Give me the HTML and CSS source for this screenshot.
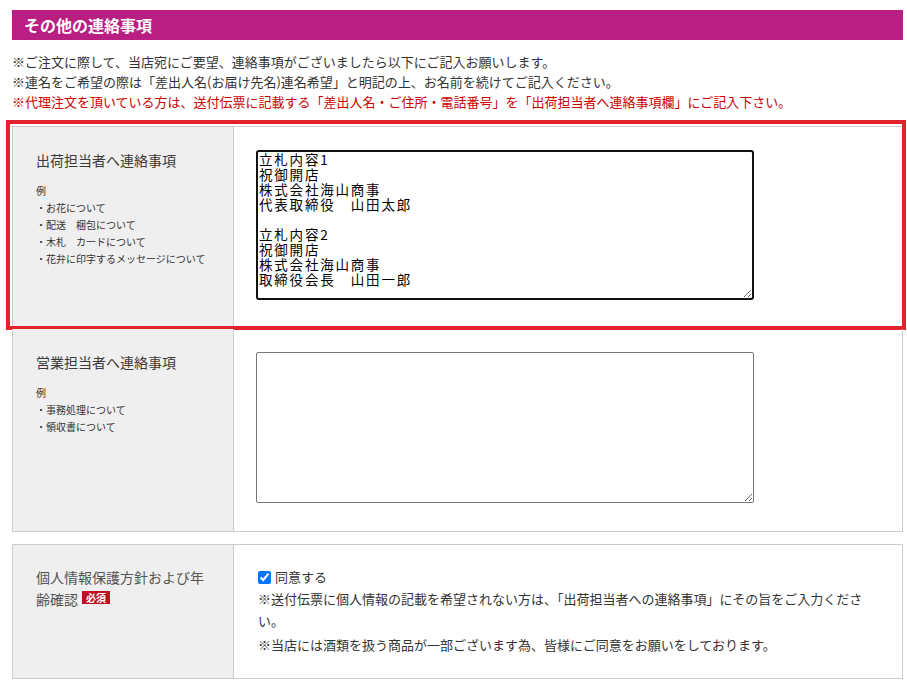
FILE: index.html
```html
<!DOCTYPE html>
<html lang="ja">
<head>
<meta charset="utf-8">
<title>その他の連絡事項</title>
<link rel="stylesheet" href="styles.css">
</head>
<body>
<div class="page">
  <h2 class="section-title">その他の連絡事項</h2>
  <div class="notes">
    <p>※ご注文に際して、当店宛にご要望、連絡事項がございましたら以下にご記入お願いします。</p>
    <p>※連名をご希望の際は「差出人名(お届け先名)連名希望」と明記の上、お名前を続けてご記入ください。</p>
    <p class="notes-red">※代理注文を頂いている方は、送付伝票に記載する「差出人名・ご住所・電話番号」を「出荷担当者へ連絡事項欄」にご記入下さい。</p>
  </div>

  <div class="form-table">
    <div class="row row-highlight">
      <div class="label-cell">
        <div class="label">出荷担当者へ連絡事項</div>
        <ul class="examples">
          <li>例</li>
          <li>・お花について</li>
          <li>・配送　梱包について</li>
          <li>・木札　カードについて</li>
          <li>・花弁に印字するメッセージについて</li>
        </ul>
      </div>
      <div class="input-cell">
        <textarea class="memo memo-active">立札内容1
祝御開店
株式会社海山商事
代表取締役　山田太郎

立札内容2
祝御開店
株式会社海山商事
取締役会長　山田一郎</textarea>
      </div>
      <div class="highlight-box"></div>
    </div>
    <div class="row">
      <div class="label-cell">
        <div class="label">営業担当者へ連絡事項</div>
        <ul class="examples">
          <li>例</li>
          <li>・事務処理について</li>
          <li>・領収書について</li>
        </ul>
      </div>
      <div class="input-cell">
        <textarea class="memo"></textarea>
      </div>
    </div>
  </div>

  <div class="form-table form-table-agree">
    <div class="row">
      <div class="label-cell label-cell-agree">
        <p class="label-agree">個人情報保護方針および年</p>
        <p class="label-agree">齢確認<span class="badge">必須</span></p>
      </div>
      <div class="agree-cell">
        <label class="agree"><input type="checkbox" checked class="agree-check">同意する</label>
        <p>※送付伝票に個人情報の記載を希望されない方は、「出荷担当者への連絡事項」にその旨をご入力ください。</p>
        <p class="agree-last">※当店には酒類を扱う商品が一部ございます為、皆様にご同意をお願いをしております。</p>
      </div>
    </div>
  </div>
</div>
</body>
</html>
```

FILE: styles.css
```css
* {
  box-sizing: border-box;
}

html, body {
  margin: 0;
  padding: 0;
  background: #ffffff;
}

body {
  font-family: "Noto Sans CJK JP", "Noto Sans", sans-serif;
  color: #333333;
}

.page {
  padding: 10px 4px 0 12px;
}

.section-title {
  margin: 0;
  height: 30px;
  line-height: 30px;
  padding-left: 12px;
  background: #b91e82;
  color: #ffffff;
  font-size: 16px;
  font-weight: bold;
}

.notes {
  margin: 12px 0 14px;
  font-size: 13px;
  line-height: 20px;
  color: #333333;
}

.notes p {
  margin: 0;
  white-space: nowrap;
}

.notes .notes-red {
  color: #cc0000;
}

.form-table {
  width: 891px;
}

.row {
  display: grid;
  grid-template-columns: 221px 1fr;
  border: 1px solid #cccccc;
  position: relative;
}

.row + .row {
  border-top: none;
}

.label-cell {
  background: #efefef;
  border-right: 1px solid #cccccc;
  padding: 23px 24px 20px 23px;
}

.label {
  font-size: 14px;
  line-height: 20px;
  color: #3a3a3a;
}

.examples {
  list-style: none;
  margin: 12px 0 0;
  padding: 0;
  font-size: 10px;
  line-height: 17px;
  color: #333333;
}

.input-cell {
  padding: 23px 22px 28px 22px;
}

.memo {
  display: block;
  width: 498px;
  height: 151px;
  margin: 0;
  padding: 0 1px;
  font-family: "Noto Sans CJK JP", monospace;
  font-size: 13.5px;
  letter-spacing: 1.8px;
  line-height: 15px;
  color: #000000;
  background: #ffffff;
  border: 1px solid #767676;
  border-radius: 2px;
  overflow: hidden;
}

.memo-active {
  height: 150px;
  border: 2px solid #111111;
  border-radius: 3px;
}

.highlight-box {
  position: absolute;
  top: -7px;
  left: -7px;
  right: -4px;
  bottom: -2px;
  border: 4px solid #e1232d;
  pointer-events: none;
}

.form-table-agree {
  margin-top: 12px;
}

.label-cell-agree {
  padding: 21px 24px 20px 23px;
}

.label-agree {
  margin: 0;
  font-size: 14px;
  line-height: 22px;
  color: #555555;
  white-space: nowrap;
}

.badge {
  display: inline-block;
  margin-left: 4px;
  padding: 0 4px;
  background: #c40f22;
  color: #ffffff;
  font-size: 10px;
  font-weight: bold;
  line-height: 13px;
  vertical-align: 3px;
}

.agree-cell {
  padding: 21px 28px 22px 24px;
  font-size: 13px;
  line-height: 22px;
  color: #333333;
}

.agree {
  display: flex;
  align-items: center;
}

.agree-check {
  width: 13px;
  height: 13px;
  margin: 0 4px 0 0;
}

.agree-cell p {
  margin: 0;
}

.agree-cell .agree-last {
  margin-top: 2px;
}
```
